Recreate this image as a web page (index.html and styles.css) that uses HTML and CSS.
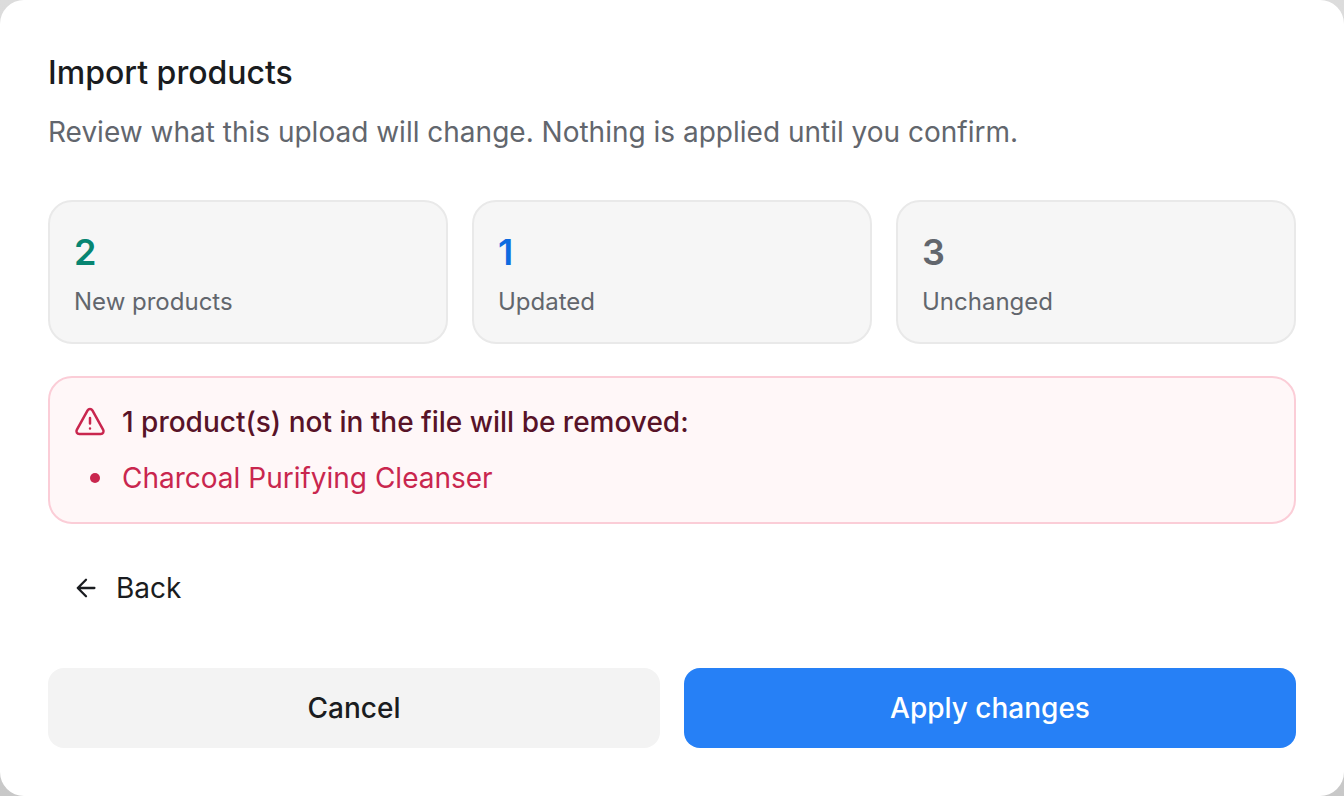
FILE: index.html
```html
<!DOCTYPE html>
<html lang="en">
<head>
    <meta charset="UTF-8">
    <meta name="viewport" content="width=device-width, initial-scale=1.0">
    <title>Import products</title>
    <link rel="stylesheet" href="styles.css">
</head>
<body>
    <main class="dialog" role="dialog" aria-labelledby="dialogTitle">
        <header class="dialog-header">
            <h1 id="dialogTitle" class="dialog-title">Import products</h1>
            <p class="dialog-text">Review what this upload will change. Nothing is applied until you confirm.</p>
        </header>

        <section class="stats">
            <div class="stat">
                <div class="stat-value stat-new">2</div>
                <div class="stat-label">New products</div>
            </div>
            <div class="stat">
                <div class="stat-value stat-updated">1</div>
                <div class="stat-label">Updated</div>
            </div>
            <div class="stat">
                <div class="stat-value">3</div>
                <div class="stat-label">Unchanged</div>
            </div>
        </section>

        <section class="alert">
            <h2 class="alert-title">
                <svg class="alert-icon" viewBox="0 0 32 32" fill="none" stroke="currentColor" stroke-width="2.5" stroke-linecap="round" stroke-linejoin="round" aria-hidden="true">
                    <path d="M13.6 4.3 2.8 23.8A2.8 2.8 0 0 0 5.2 28H26.8A2.8 2.8 0 0 0 29.2 23.8L18.4 4.3A2.8 2.8 0 0 0 13.6 4.3Z"/>
                    <path d="M16 12v5.4M16 22.4v.2"/>
                </svg>
                1 product(s) not in the file will be removed:
            </h2>
            <ul class="alert-list">
                <li>Charcoal Purifying Cleanser</li>
            </ul>
        </section>

        <button type="button" class="button button-back">
            <svg class="back-icon" viewBox="0 0 28 28" fill="none" stroke="currentColor" stroke-width="2.3" stroke-linecap="round" stroke-linejoin="round" aria-hidden="true">
                <path d="M22.4 14H5.8M14 5.8 5.8 14l8.2 8.2"/>
            </svg>
            Back
        </button>

        <footer class="actions">
            <button type="button" class="button button-cancel">Cancel</button>
            <button type="button" class="button button-apply">Apply changes</button>
        </footer>
    </main>
</body>
</html>
```
FILE: styles.css
```css
* {
    box-sizing: border-box;
}
body {
    margin: 0;
    background: linear-gradient(#dcdcdc, #c8c8c8);
    font-family: Inter, "Liberation Sans", sans-serif;
    font-size: 28px;
    line-height: 40px;
    color: #1a1c20;
}
h1, h2, p, ul {
    margin: 0;
}
.dialog {
    display: flex;
    flex-direction: column;
    min-height: 100vh;
    padding: 48px;
    background: #fff;
    border-radius: 24px;
}
.dialog-header {
    display: flex;
    flex-direction: column;
    gap: 14px;
    margin-bottom: 48px;
}
.dialog-title {
    font-size: 32px;
    line-height: 50px;
    font-weight: 500;
}
.dialog-text {
    color: #62666d;
}
.stats {
    display: grid;
    grid-template-columns: repeat(3, 1fr);
    gap: 24px;
    margin-bottom: 32px;
}
.stat {
    display: flex;
    flex-direction: column;
    gap: 8px;
    padding: 24px;
    background: #f6f6f6;
    border: 2px solid #e9e9e9;
    border-radius: 24px;
    color: #62666d;
}
.stat-value {
    font-size: 36px;
    line-height: 52px;
    font-weight: 600;
}
.stat-new {
    color: #078571;
}
.stat-updated {
    color: #0d6be0;
}
.stat-label {
    font-size: 24px;
    line-height: 32px;
}
.alert {
    display: flex;
    flex-direction: column;
    gap: 16px;
    margin-bottom: 32px;
    padding: 24px;
    background: #fff7f8;
    border: 2px solid #fbcdd7;
    border-radius: 24px;
    color: #c9264e;
}
.alert-title {
    display: flex;
    align-items: center;
    gap: 16px;
    font-size: 28px;
    font-weight: 500;
    color: #581328;
}
.alert-icon {
    flex: none;
    width: 32px;
    height: 32px;
    color: #c9264e;
}
.alert-list {
    padding: 0 0 0 16px;
    list-style: none;
}
.alert-list li {
    display: flex;
    align-items: center;
    gap: 22px;
}
.alert-list li::before {
    content: "";
    width: 10px;
    height: 10px;
    border-radius: 50%;
    background: currentColor;
}
.button {
    border: none;
    border-radius: 16px;
    background: none;
    font: inherit;
    color: inherit;
    cursor: pointer;
}
.button-back {
    display: flex;
    align-items: center;
    align-self: flex-start;
    gap: 16px;
    margin-bottom: 48px;
    padding: 12px 24px;
}
.back-icon {
    width: 28px;
    height: 28px;
}
.actions {
    display: grid;
    grid-template-columns: 1fr 1fr;
    gap: 24px;
}
.button-cancel,
.button-apply {
    padding: 20px;
    font-weight: 500;
}
.button-cancel {
    background: #f3f3f3;
}
.button-apply {
    background: #2680f6;
    color: #fff;
}
```
